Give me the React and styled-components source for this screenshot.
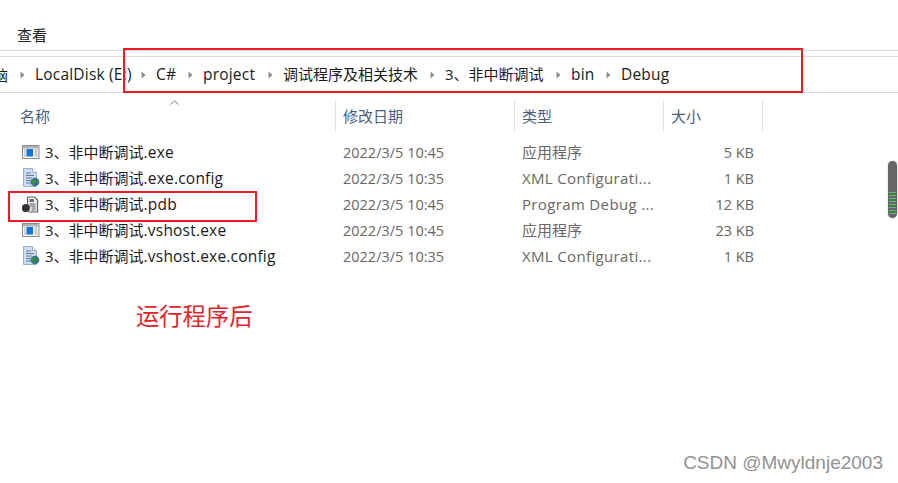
import React from "react";
import styled, { createGlobalStyle } from "styled-components";

const Global = createGlobalStyle`
  html, body { margin: 0; padding: 0; background: #fff; }
  body { font-family: "Open Sans", "Noto Sans CJK SC", sans-serif; overflow: hidden; }
`;
const Page = styled.div`
  position: relative; width: 898px; height: 483px; overflow: hidden; background: #fff;
`;
const Toolbar = styled.div`
  height: 51px; box-sizing: border-box; padding: 24px 0 0 17px;
  border-bottom: 1px solid #dcdcdc;
`;
const MenuItem = styled.span`
  font-size: 15px; line-height: 22px; color: #222; font-family: "Noto Sans CJK SC", sans-serif;
`;
const AddressBar = styled.div`
  position: relative; margin-top: 5px; height: 37px; box-sizing: border-box;
  border-top: 1px solid #dcdcdc; border-bottom: 1px solid #dcdcdc;
  display: flex; align-items: center; padding-left: 20px; white-space: nowrap;
`;
const Crumb = styled.span`
  font-size: 15px; color: #1a1a1a; line-height: 35px; margin-left: 10px; flex: none;
  width: ${p => p.$w}px;
  font-family: "Open Sans", "Noto Sans CJK SC", sans-serif;
`;
const ClippedCrumb = styled.span`
  position: absolute; left: -7px; top: 0; font-size: 15px; line-height: 35px; color: #1a1a1a;
  font-family: "Noto Sans CJK SC", sans-serif;
`;
const Latin = styled.span`
  font-size: 15.5px; letter-spacing: 0.2px;
`;
const Chevron = styled.svg`
  width: 5px; height: 8px; flex: none;
`;
const HeaderRow = styled.div`
  position: relative; display: grid; grid-template-columns: 335px 179px 149px 100px;
  height: 46px; padding-top: 7px; box-sizing: border-box;
`;
const HeaderCell = styled.div`
  border-left: ${p => (p.$first ? "none" : "1px solid #e4e4e4")};
  border-right: ${p => (p.$last ? "1px solid #e4e4e4" : "none")};
  height: 31px; box-sizing: border-box; padding: 4px 0 0 ${p => (p.$first ? 20 : 7)}px;
  font-size: 15px; line-height: 24px; color: #4c607a;
  font-family: "Noto Sans CJK SC", sans-serif;
`;
const SortCaret = styled.svg`
  position: absolute; left: 170px; top: 7px; width: 9px; height: 5px;
`;
const FileList = styled.div`
  display: flex; flex-direction: column;
`;
const Row = styled.div`
  display: grid; grid-template-columns: 336px 178px 150px 90px; height: 26px; align-items: center;
`;
const NameCell = styled.div`
  display: flex; align-items: center; gap: 5px; padding-left: 22px; color: #1a1a1a; font-size: 15px;
  font-family: "Open Sans", "Noto Sans CJK SC", sans-serif; white-space: nowrap;
`;
const IconBox = styled.svg`
  width: 18px; height: 20px; flex: none;
`;
const DateCell = styled.div`
  padding-left: 7px; white-space: nowrap; color: #676767; font-size: 14.5px;
`;
const TypeCell = styled.div`
  padding: 0 0 ${p => (p.$latin ? 0 : 2)}px 8px; white-space: nowrap; color: #676767; font-size: 15px;
  letter-spacing: ${p => (p.$latin ? 0.35 : 0)}px;
  font-family: "Open Sans", "Noto Sans CJK SC", sans-serif;
`;
const SizeCell = styled.div`
  text-align: right; color: #676767; white-space: nowrap; font-size: 14.5px;
`;
const Note = styled.div`
  margin: 31px 0 0 136px; font-size: 23.3px; line-height: 30px; color: #e0262c;
  font-family: "Noto Sans CJK SC", sans-serif;
`;
const RedBox = styled.div`
  position: absolute; box-sizing: border-box; border: 2px solid #ed1c24; pointer-events: none;
  left: ${p => p.$x}px; top: ${p => p.$y}px; width: ${p => p.$w}px; height: ${p => p.$h}px;
`;
const Scrollbar = styled.div`
  position: absolute; left: 888px; top: 161px; width: 9px; height: 57px; border-radius: 5px;
  background: #666; overflow: hidden; box-shadow: 0 0 2px rgba(0,0,0,.25);
`;
const ScrollStripes = styled.div`
  position: absolute; left: 1px; right: 1px; bottom: 2px; height: 24px;
  background: repeating-linear-gradient(to bottom, #4cc764 0 1px, #666 1px 3px);
`;
const Watermark = styled.div`
  position: absolute; right: 15px; top: 451px; font-size: 19px; line-height: 24px;
  color: #929292; font-family: "Liberation Sans", Arial, sans-serif;
`;

const ChevronIcon = () => (
  <Chevron viewBox="0 0 5 8"><path d="M0.5 0.5 L4.5 4 L0.5 7.5 Z" fill="#8a8a8a" /></Chevron>
);

const ExeIcon = () => (
  <IconBox viewBox="0 0 18 20">
    <rect x="0.5" y="3.5" width="16.5" height="13" fill="#f5f5f5" stroke="#8c8c8c" />
    <rect x="1" y="4" width="15.5" height="2.5" fill="#b0b0b0" />
    <rect x="4.5" y="7" width="6.5" height="7.5" fill="#0a78dc" />
    <path d="M12.5 8h3M12.5 10h3M12.5 12h3M12.5 14h3M2 8h1.5M2 10h1.5M2 12h1.5M2 14h1.5" stroke="#a5a5a5" />
  </IconBox>
);
const ConfigIcon = () => (
  <IconBox viewBox="0 0 18 20">
    <path d="M1.5 0.5H10.5L14.5 4.5V18.5H1.5Z" fill="#cfdcf3" stroke="#9cafcf" />
    <path d="M10.5 0.5V4.5H14.5" fill="#fff" stroke="#9cafcf" />
    <path d="M4 5h5M4 7.5h8M4 10h6M4 12.5h5M4 15h5" stroke="#5f7aa5" />
    <circle cx="13" cy="14" r="4.3" fill="#2f6fa8" />
    <path d="M10 12.5c1.5-1.5 3-1.5 4-.5s0 2-1 2.5-1 2 0 3.5c-2 0-3.5-2-3-5.5ZM15 11.5c1.5.5 2.3 2 2.3 3l-1.8.5-1-2Z" fill="#3c8f3c" />
  </IconBox>
);
const PdbIcon = () => (
  <IconBox viewBox="0 0 18 20">
    <path d="M5.5 3H12.5L15.5 6V18H6" fill="#f1f1f1" stroke="#5f5f5f" strokeWidth="1.2" />
    <path d="M5.5 3V10" stroke="#5f5f5f" strokeWidth="1.2" />
    <rect x="7.5" y="5" width="4.5" height="3" fill="#6f6f6f" />
    <path d="M7.5 10h6M7.5 12h6M9.5 14h4M9.5 16h4" stroke="#5f5f5f" />
    <circle cx="3.9" cy="14" r="4" fill="#333" />
  </IconBox>
);

const crumbs = [
  ["LocalDisk (E:)", 106, true],
  ["C#", 32, true],
  ["project", 65, true],
  ["调试程序及相关技术", 147, false],
  ["3、非中断调试", 111, false],
  ["bin", 35, true],
  ["Debug", 60, true],
];

const files = [
  { stem: "3、非中断调试", ext: ".exe", Icon: ExeIcon, date: "2022/3/5 10:45", type: "应用程序", size: "5 KB" },
  { stem: "3、非中断调试", ext: ".exe.config", Icon: ConfigIcon, date: "2022/3/5 10:35", type: "XML Configurati...", latin: true, size: "1 KB" },
  { stem: "3、非中断调试", ext: ".pdb", Icon: PdbIcon, date: "2022/3/5 10:45", type: "Program Debug ...", latin: true, size: "12 KB" },
  { stem: "3、非中断调试", ext: ".vshost.exe", Icon: ExeIcon, date: "2022/3/5 10:45", type: "应用程序", size: "23 KB" },
  { stem: "3、非中断调试", ext: ".vshost.exe.config", Icon: ConfigIcon, date: "2022/3/5 10:35", type: "XML Configurati...", latin: true, size: "1 KB" },
];

export default function App() {
  return (
    <Page>
      <Global />
      <Toolbar><MenuItem>查看</MenuItem></Toolbar>
      <AddressBar>
        <ClippedCrumb>脑</ClippedCrumb>
        {crumbs.map(([label, w, latin]) => (
          <React.Fragment key={label}>
            <ChevronIcon />
            <Crumb $w={w}>{latin ? <Latin>{label}</Latin> : label}</Crumb>
          </React.Fragment>
        ))}
      </AddressBar>
      <HeaderRow>
        <SortCaret viewBox="0 0 9 5"><path d="M0.5 4.5 L4.5 0.8 L8.5 4.5" fill="none" stroke="#777" /></SortCaret>
        <HeaderCell $first>名称</HeaderCell>
        <HeaderCell>修改日期</HeaderCell>
        <HeaderCell>类型</HeaderCell>
        <HeaderCell $last>大小</HeaderCell>
      </HeaderRow>
      <FileList>
        {files.map(({ stem, ext, Icon, date, type, latin, size }) => (
          <Row key={ext}>
            <NameCell><Icon /><span>{stem}<Latin>{ext}</Latin></span></NameCell>
            <DateCell>{date}</DateCell>
            <TypeCell $latin={latin}>{type}</TypeCell>
            <SizeCell>{size}</SizeCell>
          </Row>
        ))}
      </FileList>
      <Note>运行程序后</Note>
      <RedBox $x={123} $y={48} $w={680} $h={45} />
      <RedBox $x={8} $y={191} $w={249} $h={31} />
      <Scrollbar><ScrollStripes /></Scrollbar>
      <Watermark>CSDN @Mwyldnje2003</Watermark>
    </Page>
  );
}
